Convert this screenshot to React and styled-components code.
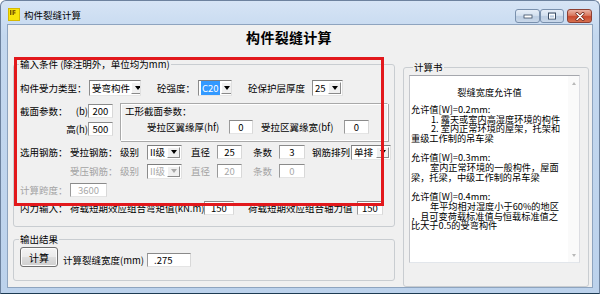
import React from "react";
import styled, { createGlobalStyle } from "styled-components";

const GlobalStyle = createGlobalStyle`
  html, body {
    margin: 0;
    padding: 0;
    background: #ffffff;
  }
  body {
    font-family: "Noto Sans CJK SC", "Liberation Sans", sans-serif;
    font-size: 9.5px;
    color: #000;
  }
`;

const Window = styled.div`
  width: 600px;
  height: 294px;
  box-sizing: border-box;
  display: flex;
  flex-direction: column;
  border: 1px solid #6d829e;
  border-bottom-color: #1d3b52;
  border-radius: 6px 6px 0 0;
  background: linear-gradient(180deg, #d6e4f5 0%, #c4d8ef 12%, #bcd2ec 100%);
  overflow: hidden;
`;

const TitleBar = styled.div`
  height: 23px;
  flex: none;
  display: flex;
  align-items: flex-start;
  padding: 7px 7px 0 7px;
  box-sizing: border-box;
`;

const TitleText = styled.span`
  margin-left: 4px;
  line-height: 14px;
  font-size: 9.5px;
  color: #000;
`;

const CaptionButtons = styled.div`
  margin-left: auto;
  margin-top: 1px;
  display: flex;
`;

const CapBtn = styled.div`
  width: ${(p) => p.w}px;
  height: 14px;
  box-sizing: border-box;
  margin-left: ${(p) => p.ml || 0}px;
  display: flex;
  align-items: center;
  justify-content: center;
  border: 1px solid ${(p) => (p.close ? "#8d3f32" : "#7990ad")};
  border-radius: 3px;
  background: ${(p) =>
    p.close
      ? "linear-gradient(180deg, #eab3a5 0%, #d9795f 45%, #c84a2f 55%, #d7704f 100%)"
      : "linear-gradient(180deg, #e6eef8 0%, #d3e0ef 45%, #bccde2 55%, #c9d8ea 100%)"};
`;

const Client = styled.div`
  flex: 1;
  margin: 0 6px 5px;
  border: 1px solid #8ea4bf;
  background: #f0f0f0;
  display: flex;
  flex-direction: column;
`;

const Heading = styled.div`
  height: 25px;
  line-height: 25px;
  text-align: center;
  padding-right: 22px;
  font-size: 14px;
  font-weight: bold;
  letter-spacing: 0.3px;
`;

const Body = styled.div`
  position: relative;
  flex: 1;
  display: flex;
  padding: 0 3px 0 5px;
`;

const LeftCol = styled.div`
  width: 382px;
  flex: none;
  display: flex;
  flex-direction: column;
`;

const Group = styled.fieldset`
  margin: ${(p) => p.mt}px 0 0;
  padding: ${(p) => p.pad};
  border: 1px solid #c9cdd1;
  border-radius: 3px;
  min-width: 0;
  box-sizing: border-box;
  width: ${(p) => p.w}px;
  flex: none;
`;

const Legend = styled.legend`
  padding: 0 1px;
  margin-left: ${(p) => p.ml}px;
  line-height: 14px;
  font-size: 9.5px;
`;

const Row = styled.div`
  display: flex;
  align-items: ${(p) => p.align || "center"};
  height: ${(p) => p.h || 16}px;
  margin-top: ${(p) => p.mt || 0}px;
  margin-left: ${(p) => p.ml || 0}px;
`;

const Label = styled.span`
  flex: none;
  width: ${(p) => p.w}px;
  margin-left: ${(p) => p.ml || 0}px;
  white-space: nowrap;
  color: ${(p) => (p.disabled ? "#a3a3a3" : "#000")};
  text-align: ${(p) => (p.right ? "right" : "left")};
  line-height: 14px;
`;

const TextBox = styled.div`
  flex: none;
  box-sizing: border-box;
  width: ${(p) => p.w}px;
  height: 14px;
  margin-left: ${(p) => p.ml || 0}px;
  margin-top: ${(p) => p.mt || 0}px;
  border: 1px solid;
  border-color: #8a8a8a #d8d8d8 #e4e4e4 #9a9a9a;
  background: #fff;
  color: ${(p) => (p.disabled ? "#a8a8a8" : "#000")};
  line-height: 12px;
  text-align: ${(p) => (p.left ? "left" : "center")};
  padding-left: ${(p) => (p.left ? 6 : 0)}px;
  font-size: 9.5px;
  white-space: nowrap;
  overflow: hidden;
`;

const Combo = styled.div`
  flex: none;
  box-sizing: border-box;
  width: ${(p) => p.w}px;
  height: ${(p) => p.h || 15}px;
  margin-left: ${(p) => p.ml || 0}px;
  display: flex;
  align-items: center;
  border: 1px solid;
  border-color: #7d7d7d #e0e0e0 #e6e6e6 #8c8c8c;
  background: #fff;
  color: ${(p) => (p.disabled ? "#a8a8a8" : "#000")};
  padding-left: 2px;
  overflow: hidden;
`;

const ComboText = styled.span`
  flex: 1;
  white-space: nowrap;
  line-height: 12px;
`;

const Selected = styled.span`
  background: #3399ff;
  color: #fff;
  padding: 0 1px;
`;

const DropBtn = styled.span`
  flex: none;
  width: 13px;
  height: calc(100% - 2px);
  margin: 1px;
  box-sizing: border-box;
  display: flex;
  align-items: center;
  justify-content: center;
  background: #f0f0f0;
  border: 1px solid;
  border-color: #ffffff #8a8a8a #8a8a8a #ffffff;

  &::after {
    content: "";
    border-left: 3.5px solid transparent;
    border-right: 3.5px solid transparent;
    border-top: 4px solid ${(p) => (p.disabled ? "#a8a8a8" : "#000")};
  }
`;

const Section = styled.div`
  display: flex;
  margin-top: 7px;
  height: 38px;
`;

const SizeGrid = styled.div`
  display: grid;
  grid-template-columns: 50px 18px 25px;
  grid-template-rows: 14px 14px;
  row-gap: 4px;
  margin-top: 1px;
  align-items: center;
`;

const SpanLabel = styled.span`
  grid-column: ${(p) => p.col};
  white-space: nowrap;
  text-align: ${(p) => (p.right ? "right" : "left")};
  line-height: 14px;
`;

const Panel = styled.div`
  margin-left: 7px;
  width: 268px;
  height: 38px;
  box-sizing: border-box;
  border: 1px solid #a9a9a9;
  border-right-color: #ffffff;
  border-bottom-color: #ffffff;
  box-shadow: inset 1px 1px 0 #ffffff, 1px 1px 0 #a9a9a9;
  padding: 1px 0 0 4px;
`;

const PanelTitle = styled.div`
  line-height: 13px;
  white-space: nowrap;
`;

const CalcButton = styled.div`
  flex: none;
  width: 38px;
  height: 20px;
  box-sizing: border-box;
  border: 1px solid #707070;
  border-radius: 3px;
  background: linear-gradient(180deg, #f4f4f4 0%, #ebebeb 48%, #dddddd 52%, #cfcfcf 100%);
  box-shadow: inset 0 0 0 1px #fcfcfc;
  display: flex;
  align-items: center;
  justify-content: center;
  font-size: 10px;
`;

const Memo = styled.div`
  display: flex;
  width: 171px;
  height: 188px;
  box-sizing: border-box;
  border: 1px solid;
  border-color: #a5a7ad #dcdde2 #e2e6eb #c5c7cc;
  background: #fff;
`;

const MemoText = styled.div`
  flex: 1;
  padding: 11px 0 0 1px;
  font-size: 9.2px;
  overflow: hidden;
`;

const MemoTitle = styled.div`
  text-align: center;
  line-height: 10px;
  margin-bottom: 8px;
`;

const MemoLine = styled.div`
  line-height: 9.7px;
  height: 9.7px;
  white-space: nowrap;
  padding-left: ${(p) => p.indent || 0}px;
`;

const ScrollBar = styled.div`
  width: 11px;
  flex: none;
  background: #fafafa;
  display: flex;
  flex-direction: column;
  justify-content: space-between;
`;

const ScrollArrow = styled.div`
  height: 14px;
  display: flex;
  align-items: center;
  justify-content: center;

  &::after {
    content: "";
    border-left: 2.5px solid transparent;
    border-right: 2.5px solid transparent;
    ${(p) => (p.up ? "border-bottom" : "border-top")}: 3px solid #b8b8b8;
  }
`;

const Annotation = styled.div`
  position: absolute;
  left: 6px;
  top: 7px;
  width: 370px;
  height: 149px;
  box-sizing: border-box;
  border: 3px solid #e2181c;
  pointer-events: none;
`;

const AppIcon = () => (
  <svg width="12" height="13" viewBox="0 0 12 13">
    <rect x="0" y="0" width="12" height="13" fill="#f7e40c" />
    <rect x="0.5" y="0.5" width="11" height="12" fill="none" stroke="#d6b800" />
    <rect x="2" y="2" width="1.4" height="5" fill="#7a5a00" />
    <rect x="4.5" y="2" width="1.4" height="5" fill="#7a5a00" />
    <rect x="5.5" y="2" width="2" height="1.3" fill="#7a5a00" />
    <rect x="5.5" y="4.2" width="2" height="1.3" fill="#7a5a00" />
  </svg>
);

const MinGlyph = () => (
  <svg width="10" height="6" viewBox="0 0 10 6">
    <rect x="1" y="2" width="8" height="3" fill="#ffffff" stroke="#3b4c63" strokeWidth="0.8" />
  </svg>
);

const MaxGlyph = () => (
  <svg width="10" height="8" viewBox="0 0 10 8">
    <rect x="1.5" y="1" width="7" height="6" fill="none" stroke="#3b4c63" strokeWidth="1" />
    <rect x="2.5" y="2.5" width="5" height="3.5" fill="none" stroke="#ffffff" strokeWidth="1" />
  </svg>
);

const CloseGlyph = () => (
  <svg width="10" height="9" viewBox="0 0 10 9">
    <path d="M2 1.5 L8 7.5 M8 1.5 L2 7.5" stroke="#6b2418" strokeWidth="3" strokeLinecap="round" />
    <path d="M2 1.5 L8 7.5 M8 1.5 L2 7.5" stroke="#ffffff" strokeWidth="1.6" strokeLinecap="round" />
  </svg>
);

const memoLines = [
  { text: "允许值[W]=0.2mm:" },
  { text: "1. 露天或室内高湿度环境的构件", indent: 20 },
  { text: "2. 室内正常环境的屋架，托架和", indent: 20 },
  { text: "重级工作制的吊车梁" },
  { text: "" },
  { text: "允许值[W]=0.3mm:" },
  { text: "室内正常环境的一般构件，屋面", indent: 19 },
  { text: "梁，托梁，中级工作制的吊车梁" },
  { text: "" },
  { text: "允许值[W]=0.4mm:" },
  { text: "年平均相对湿度小于60%的地区", indent: 19 },
  { text: "，且可变荷载标准值与恒载标准值之" },
  { text: "比大于0.5的受弯构件" },
];

export default function App() {
  return (
    <>
      <GlobalStyle />
      <Window>
        <TitleBar>
          <AppIcon />
          <TitleText>构件裂缝计算</TitleText>
          <CaptionButtons>
            <CapBtn w={25}>
              <MinGlyph />
            </CapBtn>
            <CapBtn w={24}>
              <MaxGlyph />
            </CapBtn>
            <CapBtn w={25} ml={3} close>
              <CloseGlyph />
            </CapBtn>
          </CaptionButtons>
        </TitleBar>
        <Client>
          <Heading>构件裂缝计算</Heading>
          <Body>
            <LeftCol>
              <Group mt={7} pad="9px 6px 10px 6px">
                <Legend ml={-1}>输入条件 (除注明外，单位均为mm)</Legend>
                <Row h={16}>
                  <Label w={69}>构件受力类型：</Label>
                  <Combo w={52} h={16}>
                    <ComboText>受弯构件</ComboText>
                    <DropBtn />
                  </Combo>
                  <Label ml={16} w={41}>砼强度：</Label>
                  <Combo w={34} h={16}>
                    <ComboText>
                      <Selected>C20</Selected>
                    </ComboText>
                    <DropBtn />
                  </Combo>
                  <Label ml={16} w={64}>砼保护层厚度</Label>
                  <Combo w={31} h={16}>
                    <ComboText>25</ComboText>
                    <DropBtn />
                  </Combo>
                </Row>
                <Section>
                  <SizeGrid>
                    <SpanLabel col="1 / 2">截面参数：</SpanLabel>
                    <SpanLabel col="2 / 3" right>
                      (b)
                    </SpanLabel>
                    <TextBox w={25}>200</TextBox>
                    <SpanLabel col="1 / 3" right>
                      高(h)
                    </SpanLabel>
                    <TextBox w={25}>500</TextBox>
                  </SizeGrid>
                  <Panel>
                    <PanelTitle>工形截面参数：</PanelTitle>
                    <Row h={14} mt={2} ml={22}>
                      <Label w={82}>受拉区翼缘厚(hf)</Label>
                      <TextBox w={24}>0</TextBox>
                      <Label ml={8} w={83}>受拉区翼缘宽(bf)</Label>
                      <TextBox w={25}>0</TextBox>
                    </Row>
                  </Panel>
                </Section>
                <Row mt={3}>
                  <Label w={50}>选用钢筋：</Label>
                  <Label w={50}>受拉钢筋：</Label>
                  <Label w={27}>级别</Label>
                  <Combo w={35}>
                    <ComboText>II级</ComboText>
                    <DropBtn />
                  </Combo>
                  <Label ml={9} w={26}>直径</Label>
                  <TextBox w={25}>25</TextBox>
                  <Label ml={11} w={26}>条数</Label>
                  <TextBox w={26}>3</TextBox>
                  <Label ml={7} w={39}>钢筋排列</Label>
                  <Combo w={40}>
                    <ComboText>单排</ComboText>
                    <DropBtn />
                  </Combo>
                </Row>
                <Row mt={3}>
                  <Label ml={50} w={50} disabled>
                    受压钢筋：
                  </Label>
                  <Label w={27} disabled>
                    级别
                  </Label>
                  <Combo w={35} disabled>
                    <ComboText>II级</ComboText>
                    <DropBtn disabled />
                  </Combo>
                  <Label ml={9} w={26} disabled>
                    直径
                  </Label>
                  <TextBox w={25} disabled>
                    20
                  </TextBox>
                  <Label ml={11} w={26} disabled>
                    条数
                  </Label>
                  <TextBox w={26} disabled>
                    0
                  </TextBox>
                </Row>
                <Row mt={3}>
                  <Label w={50} disabled>
                    计算跨度：
                  </Label>
                  <TextBox w={37} disabled>
                    3600
                  </TextBox>
                </Row>
                <Row mt={2}>
                  <Label w={50}>内力输入：</Label>
                  <Label w={134}>荷载短期效应组合弯矩值(kN.m)</Label>
                  <TextBox w={30}>150</TextBox>
                  <Label ml={14} w={109}>荷载短期效应组合轴力值</Label>
                  <TextBox w={26}>150</TextBox>
                </Row>
              </Group>
              <Group mt={5} pad="1px 6px 13px 6px">
                <Legend ml={-1}>输出结果</Legend>
                <Row h={20} align="flex-end">
                  <CalcButton>计算</CalcButton>
                  <Label ml={5} w={84}>计算裂缝宽度(mm)</Label>
                  <TextBox w={44} left>
                    .275
                  </TextBox>
                </Row>
              </Group>
            </LeftCol>
            <Group mt={10} w={186} pad="1px 8px 6px 5px" style={{ marginLeft: 8 }}>
              <Legend ml={4}>计算书</Legend>
              <Memo>
                <MemoText>
                  <MemoTitle>裂缝宽度允许值</MemoTitle>
                  {memoLines.map((l, i) => (
                    <MemoLine key={i} indent={l.indent}>
                      {l.text}
                    </MemoLine>
                  ))}
                </MemoText>
                <ScrollBar>
                  <ScrollArrow up />
                  <ScrollArrow />
                </ScrollBar>
              </Memo>
            </Group>
            <Annotation />
          </Body>
        </Client>
      </Window>
    </>
  );
}
